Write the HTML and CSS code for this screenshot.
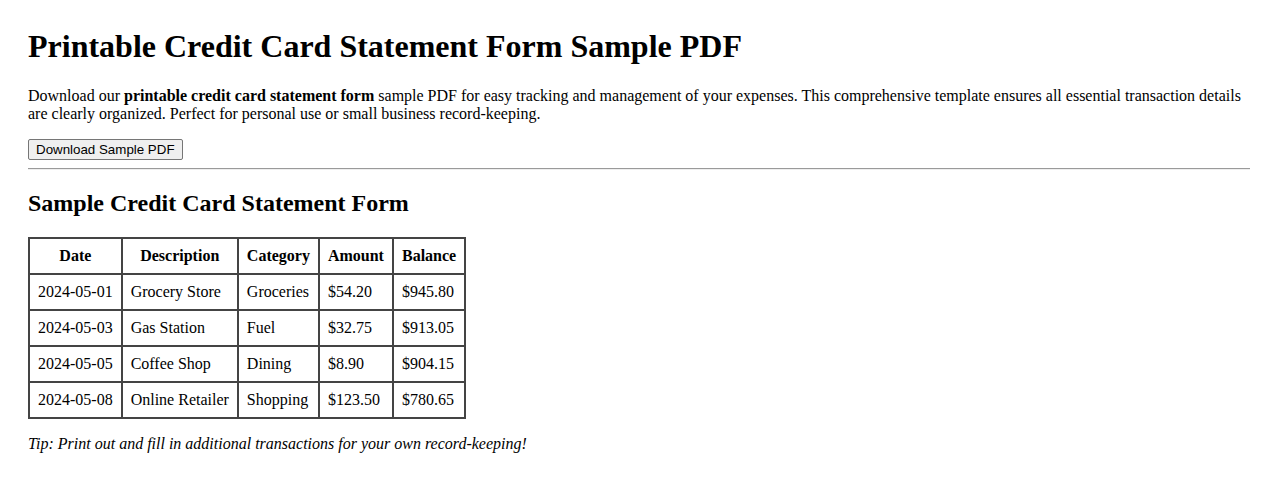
FILE: index.html
```html
<!DOCTYPE html>
<html lang="en">
<head>
<meta charset="utf-8">
<title>Printable Credit Card Statement Form Sample PDF</title>
<link rel="stylesheet" href="styles.css">
</head>
<body>
<h1 class="title">Printable Credit Card Statement Form Sample PDF</h1>
<p class="intro">Download our <strong>printable credit card statement form</strong> sample PDF for easy tracking and management of your expenses. This comprehensive template ensures all essential transaction details are clearly organized. Perfect for personal use or small business record-keeping.</p>
<button class="download" type="button">Download Sample PDF</button>
<hr class="rule">
<h2 class="subtitle">Sample Credit Card Statement Form</h2>
<table class="statement">
<thead>
<tr><th>Date</th><th>Description</th><th>Category</th><th>Amount</th><th>Balance</th></tr>
</thead>
<tbody>
<tr><td>2024-05-01</td><td>Grocery Store</td><td>Groceries</td><td>$54.20</td><td>$945.80</td></tr>
<tr><td>2024-05-03</td><td>Gas Station</td><td>Fuel</td><td>$32.75</td><td>$913.05</td></tr>
<tr><td>2024-05-05</td><td>Coffee Shop</td><td>Dining</td><td>$8.90</td><td>$904.15</td></tr>
<tr><td>2024-05-08</td><td>Online Retailer</td><td>Shopping</td><td>$123.50</td><td>$780.65</td></tr>
</tbody>
</table>
<p class="tip"><em>Tip: Print out and fill in additional transactions for your own record-keeping!</em></p>
</body>
</html>
```
FILE: styles.css
```css
html, body {
  background: #fff;
}
body {
  margin: 0;
  padding: 28px;
  font-family: "Liberation Serif", "Times New Roman", serif;
  font-size: 16px;
  color: #000;
}
.title {
  font-size: 32px;
  margin: 0 0 21.44px;
}
.intro {
  margin: 0 0 16px;
  padding-top: 1px;
}
.download {
  font-family: "Liberation Sans", Arial, sans-serif;
  font-size: 13.33px;
  padding: 2px 7px;
  background: #efefef;
  border: 1px solid #767676;
  border-radius: 2px;
  color: #000;
}
.rule {
  margin: 8px 0;
  border: none;
  border-top: 1px solid #9a9a9a;
  border-bottom: 1px solid #eee;
}
.subtitle {
  font-size: 24px;
  margin: 19.92px 0;
}
.statement {
  border-collapse: collapse;
  border: 2px solid #444;
}
.statement th,
.statement td {
  border: 2px solid #444;
  padding: 8px;
  text-align: left;
}
.statement th {
  text-align: center;
}
.tip {
  margin: 16px 0;
}
```
